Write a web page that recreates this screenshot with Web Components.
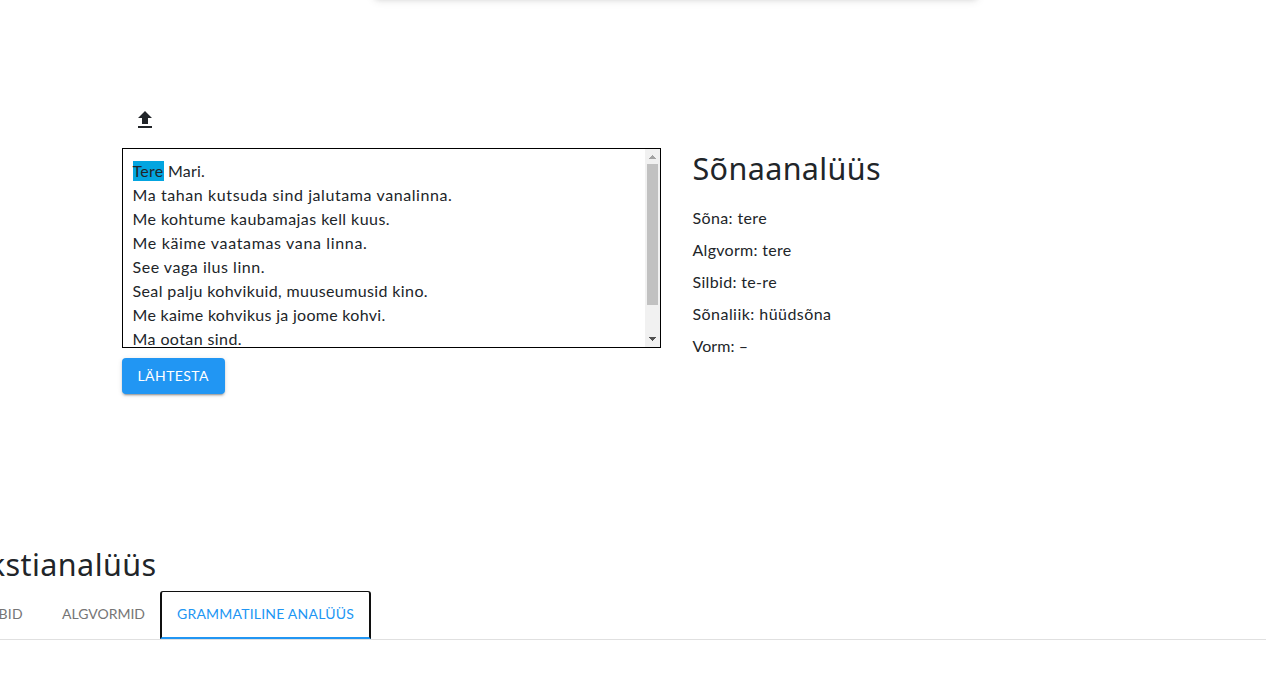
<!DOCTYPE html>
<html lang="et">
<head>
<meta charset="utf-8">
<title>Sõnaanalüüs</title>
<style>
html,body{margin:0;background:#fff;color:#212529;font:400 16px/24px Lato,"Open Sans",sans-serif}
body{height:686px;overflow:hidden}
</style>
</head>
<body>
<analysis-page></analysis-page>
<script>
const define=(name,html,setup)=>customElements.define(name,class extends HTMLElement{
  connectedCallback(){
    if(this.shadowRoot)return;
    const t=document.createElement('template');
    t.innerHTML=html;
    this.attachShadow({mode:'open'}).append(t.content.cloneNode(true));
    if(setup)setup(this,this.shadowRoot);
  }
});

// Tracks its text so that the line is as wide as the "w" attribute says.
define('fit-text',`<style>:host{display:inline-block;white-space:pre;vertical-align:top}span{display:inline-block}</style><span><slot></slot></span>`,(el,root)=>{
  const s=root.querySelector('span');
  const natural=s.getBoundingClientRect().width;
  const n=[...el.textContent].length;
  s.style.letterSpacing=((+el.getAttribute('w')-natural)/n).toFixed(4)+'px';
});

define('top-card',`<style>:host{display:block;height:40px;margin:-40px 287px 0 373px;background:#fff;border-radius:6px;box-shadow:0 1px 4px -1px rgba(0,0,0,.07),0 1px 9px rgba(0,0,0,.1)}</style>`);

define('upload-button',`<style>:host{display:flex;width:46px;height:48px;align-items:center;justify-content:center}svg{display:block;width:24px;height:24px;fill:#212529}</style>
<svg viewBox="0 0 24 24"><path d="M9 16h6v-6h4l-7-7-7 7h4zm-4 2h14v2H5z"/></svg>`);

define('scroll-track',`<style>:host{display:flex;flex-direction:column;width:15px;background:#f1f1f1}svg{display:block;width:15px;height:15px;flex:none}i{display:block;height:141px;margin:0 2px;background:#c1c1c1}b{flex:1}</style>
<svg viewBox="0 0 15 15" shape-rendering="crispEdges"><path fill="#a3a3a3" d="M7 6h1v1h1v1h1v1h1v1H4V9h1V8h1V7h1z"/></svg><i></i><b></b>
<svg viewBox="0 0 15 15" shape-rendering="crispEdges"><path fill="#505050" d="M4 5h7v1h-1v1H9v1H8v1H7V8H6V7H5V6H4z"/></svg>`);

define('text-box',`<style>:host{display:flex;box-sizing:border-box;width:539px;height:200px;border:1px solid #000;overflow:hidden}div{flex:1;padding:10px 10px 0 9.5px}</style><div><slot></slot></div><scroll-track></scroll-track>`);
define('text-line',`<style>:host{display:flex;height:24px;white-space:pre}</style><slot></slot>`);
define('word-mark',`<style>:host{display:block;height:20px;margin:2px 4.5px 0 0;line-height:20px;background:#03a5e0}</style><slot></slot>`);

define('main-button',`<style>:host{display:flex;box-sizing:border-box;width:103px;height:36px;margin-top:10px;padding-left:15.5px;align-items:center;border-radius:4px;background:#2196f3;color:#fff;font-size:14px;box-shadow:0 3px 1px -2px rgba(0,0,0,.2),0 2px 2px rgba(0,0,0,.14),0 1px 5px rgba(0,0,0,.12)}</style><slot></slot>`);

define('page-heading',`<style>:host{display:block;font:400 30.5px/38px "Noto Sans","Open Sans",sans-serif}</style><slot></slot>`);
define('info-row',`<style>:host{display:block;height:24px;margin-bottom:8px}</style><slot></slot>`);

define('tab-item',`<style>:host{display:flex;box-sizing:border-box;min-width:90px;height:48px;padding:0 16px 2px;align-items:center;justify-content:center;font-size:14px;color:#757575}
:host([active]){width:211px;margin-left:-1px;color:#2196f3;border:2px solid #101010;border-top-width:1px;border-bottom:2px solid #2196f3;border-radius:3px 3px 0 0;padding:0 15px 1px}</style><slot></slot>`);
define('tab-bar',`<style>:host{display:flex;height:48px;border-bottom:1px solid #e0e0e0}</style><slot></slot>`);

define('analysis-page',`<style>
:host{display:block;height:686px;overflow:hidden}
main{display:grid;grid-template-columns:539px 1fr;column-gap:31.5px;padding:96px 0 0 122px;height:449px;box-sizing:content-box}
upload-button{margin-bottom:4px}
aside{padding-top:53px}
aside page-heading{margin-bottom:19px}
section{margin-left:-44px}
section page-heading{margin-bottom:8px}
</style>
<top-card></top-card>
<main>
<div>
<upload-button></upload-button>
<text-box>
<text-line><word-mark><fit-text w="31">Tere</fit-text></word-mark><fit-text w="37">Mari.</fit-text></text-line>
<text-line><fit-text w="320">Ma tahan kutsuda sind jalutama vanalinna.</fit-text></text-line>
<text-line><fit-text w="257.5">Me kohtume kaubamajas kell kuus.</fit-text></text-line>
<text-line><fit-text w="235">Me käime vaatamas vana linna.</fit-text></text-line>
<text-line><fit-text w="132.5">See vaga ilus linn.</fit-text></text-line>
<text-line><fit-text w="295.5">Seal palju kohvikuid, muuseumusid kino.</fit-text></text-line>
<text-line><fit-text w="253">Me kaime kohvikus ja joome kohvi.</fit-text></text-line>
<text-line><fit-text w="109.5">Ma ootan sind.</fit-text></text-line>
</text-box>
<main-button><fit-text w="71.5">LÄHTESTA</fit-text></main-button>
</div>
<aside>
<page-heading><fit-text w="188.5">Sõnaanalüüs</fit-text></page-heading>
<info-row><fit-text w="74.5">Sõna: tere</fit-text></info-row>
<info-row><fit-text w="99">Algvorm: tere</fit-text></info-row>
<info-row><fit-text w="84.5">Silbid: te-re</fit-text></info-row>
<info-row><fit-text w="139">Sõnaliik: hüüdsõna</fit-text></info-row>
<info-row><fit-text w="55.5">Vorm: –</fit-text></info-row>
</aside>
</main>
<section>
<page-heading><fit-text w="200.5">Tekstianalüüs</fit-text></page-heading>
<tab-bar>
<tab-item><fit-text w="44">SILBID</fit-text></tab-item>
<tab-item><fit-text w="83">ALGVORMID</fit-text></tab-item>
<tab-item active><fit-text w="177">GRAMMATILINE ANALÜÜS</fit-text></tab-item>
</tab-bar>
</section>`);
</script>
</body>
</html>
